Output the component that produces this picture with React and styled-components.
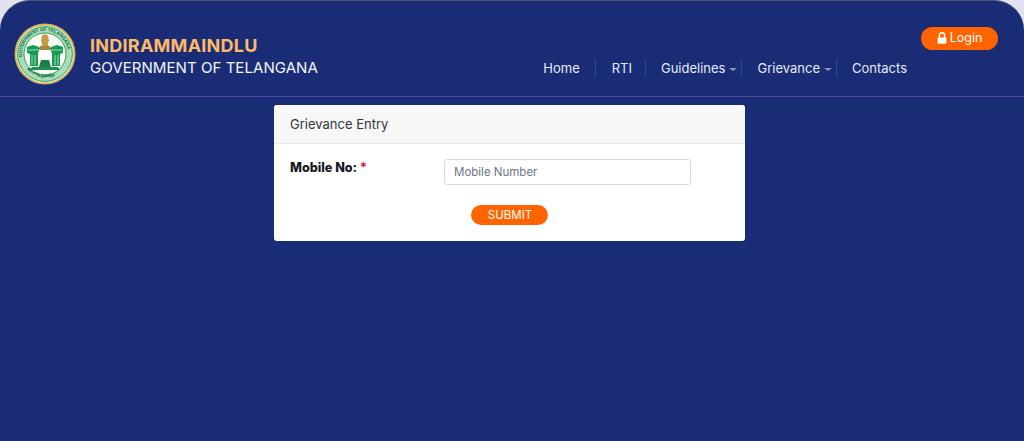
import React from 'react';
import styled, { createGlobalStyle } from 'styled-components';

const Global = createGlobalStyle`
  html, body { margin: 0; padding: 0; background: #dfe2ef; }
  body { font-family: "Inter", "Open Sans", sans-serif; overflow: hidden; }
  * { box-sizing: border-box; }
`;

const Page = styled.div`
  height: 441px;
  background: #1a2c75;
  border-top: 1px solid #4a5470;
  border-radius: 30px 30px 0 0;
`;

const Header = styled.header`
  height: 96px;
  border-bottom: 1px solid #5346ad;
  display: flex;
  justify-content: space-between;
  padding: 0 26px 0 14px;
`;

const Brand = styled.div`
  display: flex;
  align-items: center;
  gap: 14px;
  margin-top: 10px;
`;

const Titles = styled.div`
  display: flex;
  flex-direction: column;
  gap: 1px;
  margin-top: 6px;
`;

const Title = styled.div`
  color: #fdbb69;
  font-size: 18px;
  font-weight: 700;
  line-height: 22px;
  letter-spacing: 0.25px;
`;

const Subtitle = styled.div`
  color: #f3f5fb;
  font-size: 15.1px;
  line-height: 20px;
`;

const HeaderRight = styled.div`
  display: flex;
  flex-direction: column;
  align-items: flex-end;
  padding-top: 26px;
`;

const LoginButton = styled.button`
  width: 77px;
  height: 23px;
  border: none;
  border-radius: 12px;
  background: #ff6400;
  color: #fff;
  font: 400 12.5px "Inter", sans-serif;
  display: flex;
  align-items: center;
  justify-content: center;
  gap: 3px;
  padding: 0 0 2px;
`;

const Nav = styled.nav`
  display: flex;
  align-items: center;
  margin-top: 9px;
  margin-right: 76px;
  height: 18px;
`;

const NavItem = styled.a`
  color: #e6ebf8;
  font-size: 13px;
  line-height: 18px;
  display: flex;
  align-items: center;
  gap: 4px;
  height: 18px;
  padding: 0 ${p => p.$right || 15}px 0 ${p => p.$left || 15}px;
  border-right: ${p => (p.$last ? 'none' : '1px solid #2f4a95')};
`;

const Caret = styled.span`
  width: 0;
  height: 0;
  margin-top: 2px;
  border-left: 4px solid transparent;
  border-right: 4px solid transparent;
  border-top: 3px solid #8c96b8;
`;

const Main = styled.main`
  padding-top: 8px;
  padding-left: 274px;
`;

const Card = styled.section`
  width: 471px;
  height: 136px;
  background: #fff;
  border-radius: 3px;
  overflow: hidden;
`;

const CardHeader = styled.div`
  height: 39px;
  background: #f7f7f7;
  border-bottom: 1px solid #e9e9e9;
  color: #33363b;
  font-size: 13px;
  line-height: 38px;
  padding-left: 16px;
`;

const FormRow = styled.div`
  display: flex;
  padding: 15px 0 0 16px;
`;

const Label = styled.label`
  width: 154px;
  color: #15181c;
  font-size: 12.6px;
  font-weight: 800;
  line-height: 18px;
`;

const Required = styled.span`
  color: #e0243c;
`;

const Input = styled.input`
  width: 247px;
  height: 26px;
  border: 1px solid #d6d9dd;
  border-radius: 3px;
  padding: 0 9px;
  font: 400 11.5px "Inter", sans-serif;
  &::placeholder { color: #6c757d; opacity: 1; }
`;

const Actions = styled.div`
  display: flex;
  justify-content: center;
  margin-top: 20px;
  padding-right: 1px;
`;

const SubmitButton = styled.button`
  width: 77px;
  height: 20px;
  border: none;
  border-radius: 10px;
  background: #ff6400;
  color: #fff;
  font: 400 11.5px "Inter", sans-serif;
  padding: 0 0 0 2px;
`;

const Emblem = () => (
  <svg width="62" height="62" viewBox="0 0 62 62" aria-hidden="true">
    <defs>
      <path id="sealTop" d="M10.2 40.7a23 23 0 1 1 41.6 0" />
      <path id="sealBottom" d="M10 41a23.5 23.5 0 0 0 42 0" />
    </defs>
    <circle cx="31" cy="31" r="30.5" fill="#d8b25a" />
    <circle cx="31" cy="31" r="28.6" fill="#f7f8ea" />
    <circle cx="31" cy="31" r="24.2" fill="none" stroke="#a9dcb8" strokeWidth="6.4" />
    <circle cx="31" cy="31" r="27.4" fill="none" stroke="#1c9a57" strokeWidth="0.9" />
    <circle cx="31" cy="31" r="21" fill="#f8fbf1" stroke="#1c9a57" strokeWidth="0.9" />
    <text fill="#0b6a3a" fontSize="4.6" fontWeight="700" fontFamily="Liberation Sans, sans-serif">
      <textPath href="#sealTop" startOffset="7">GOVERNMENT OF TELANGANA</textPath>
    </text>
    <text fill="#0b6a3a" fontSize="4.2" fontWeight="700" fontFamily="Noto Sans, sans-serif">
      <textPath href="#sealBottom" startOffset="6">తెలంగాణ ప్రభుత్వం</textPath>
    </text>
    <path d="M13 24l6-2 6 2 3 3h6l3-3 6-2 6 2v6l-3 1v12H38V29H24v14h-8V31l-3-1z" fill="#149a54" />
    <path d="M18 32v10M21 32v10M41 32v10M44 32v10M14 27h12M36 27h12" stroke="#c7ecd2" strokeWidth="0.8" fill="none" />
    <path d="M25 27h12v17H25z" fill="#fff" />
    <path d="M28 13c0-2 6-2 6 0l1 5-1 2v3h-6v-3l-1-2z" fill="#c59b45" />
    <path d="M26 23h10v4H26z" fill="#a9873c" />
    <path d="M27 37h8l2 7H25z" fill="#1c7f4b" />
    <path d="M18 44h26l2 3H16z" fill="#1c8f52" />
  </svg>
);

const LockIcon = () => (
  <svg width="10" height="12" viewBox="0 0 10 12" aria-hidden="true">
    <path d="M2.4 6V3.4a2.6 2.6 0 0 1 5.2 0V6" fill="none" stroke="#fff" strokeWidth="1.4" />
    <rect x="0.6" y="5.4" width="8.8" height="6.4" rx="1" fill="#fff" />
  </svg>
);

export default function App() {
  return (
    <>
      <Global />
      <Page>
        <Header>
          <Brand>
            <Emblem />
            <Titles>
              <Title>INDIRAMMAINDLU</Title>
              <Subtitle>GOVERNMENT OF TELANGANA</Subtitle>
            </Titles>
          </Brand>
          <HeaderRight>
            <LoginButton><LockIcon />Login</LoginButton>
            <Nav>
              <NavItem>Home</NavItem>
              <NavItem $left={16} $right={13}>RTI</NavItem>
              <NavItem $left={15} $right={4}>Guidelines<Caret /></NavItem>
              <NavItem $left={15} $right={4}>Grievance<Caret /></NavItem>
              <NavItem $left={15} $last>Contacts</NavItem>
            </Nav>
          </HeaderRight>
        </Header>
        <Main>
          <Card>
            <CardHeader>Grievance Entry</CardHeader>
            <FormRow>
              <Label>Mobile No: <Required>*</Required></Label>
              <Input placeholder="Mobile Number" />
            </FormRow>
            <Actions>
              <SubmitButton>SUBMIT</SubmitButton>
            </Actions>
          </Card>
        </Main>
      </Page>
    </>
  );
}
